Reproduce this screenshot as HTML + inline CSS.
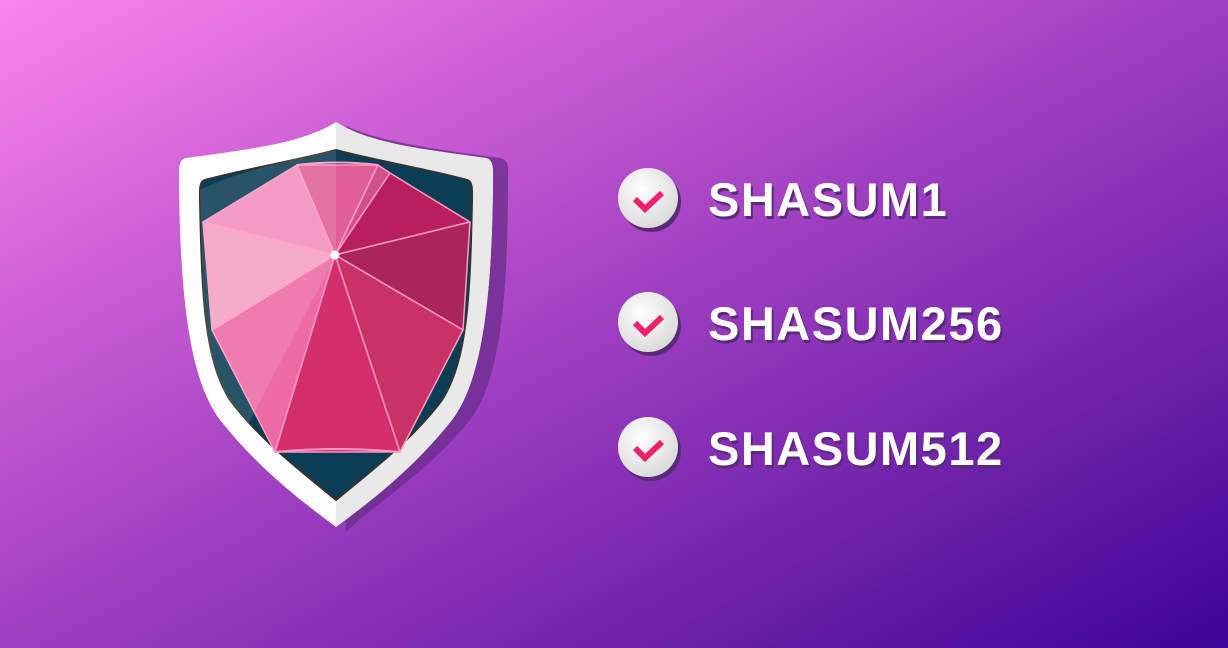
<!DOCTYPE html>
<html><head><meta charset="utf-8"><style>
html,body{margin:0;padding:0}
body{width:1228px;height:648px;overflow:hidden;background:linear-gradient(152deg,#fb84ec 0%,#c75bd2 28%,#9a3cbf 52%,#6f22aa 75%,#3d0497 100%);position:relative;font-family:"Liberation Sans",sans-serif}
svg{position:absolute;left:0;top:0}
.t{position:absolute;left:708px;color:#fff;font-weight:bold;font-size:47px;letter-spacing:1.5px;line-height:1;text-shadow:2px 3px 0 #5a2a7a}
</style></head><body>
<svg width="1228" height="648" viewBox="0 0 1228 648">
<defs>
<radialGradient id="c" cx="0.4" cy="0.35" r="0.7"><stop offset="0" stop-color="#fff"/><stop offset="1" stop-color="#d8d8d8"/></radialGradient>
</defs>
<path d="M346 126 C380 142 440 150 500 158 C510 160 508 170 508 180 C508 300 500 380 470 420 C430 470 380 500 346 532 Z" fill="#6d2e8e" opacity="0.8"/>
<path d="M336 122 C300 145 240 150 186 158 C178 160 179 170 179 180 C180 300 190 380 220 420 C260 470 300 500 336 527 C372 500 412 470 452 420 C482 380 492 300 493 180 C493 170 494 160 486 158 C432 150 372 145 336 122 Z" fill="#fff"/>
<path d="M336 122 C372 145 432 150 486 158 C494 160 493 170 493 180 C492 300 482 380 452 420 C412 470 372 500 336 527 Z" fill="#e9e9e9"/>
<path d="M336 150 C300 160 240 170 205 180 C199 182 200 190 200 200 C202 300 205 360 230 400 C260 440 300 470 336 500 C372 470 412 440 442 400 C467 360 470 300 472 200 C472 190 473 182 467 180 C432 170 372 160 336 150 Z" fill="#0b3d55" stroke="#333" stroke-width="2"/>
<g stroke="#ff9ac4" stroke-width="1.5" stroke-linejoin="round">
<polygon points="335,255 297,165 378,165" fill="#e06095"/>
<polygon points="335,255 378,165 390,173" fill="#d05088"/>
<polygon points="335,255 390,173 470,222" fill="#b81f5c"/>
<polygon points="335,255 470,222 463,330" fill="#ab255a"/>
<polygon points="335,255 463,330 400,452" fill="#c93266"/>
<polygon points="335,255 400,452 275,452" fill="#d42e6c"/>
<polygon points="335,255 275,452 212,330" fill="#ed6aa4"/>
<polygon points="335,255 212,330 203,222" fill="#f5a0c4"/>
<polygon points="335,255 203,222 297,165" fill="#f28fbc"/>
</g>
<path d="M275 452 Q337 446 400 452 M297 165 Q337 160 378 165" fill="none" stroke="#ff9ac4" stroke-width="2"/>
<path d="M336 150 L336 255 L240 440 C215 400 205 350 202 260 L200 190 C240 170 300 158 336 150 Z" fill="#fff" opacity="0.12"/>
<circle cx="335" cy="255" r="4.5" fill="#fff"/>
<g>
<circle cx="651" cy="202" r="30" fill="#5a2a7a"/><circle cx="648" cy="198" r="30" fill="url(#c)"/>
<path d="M635 199 L645 209 L662 193" fill="none" stroke="#f0206e" stroke-width="6"/>
<circle cx="651" cy="326" r="30" fill="#5a2a7a"/><circle cx="648" cy="322" r="30" fill="url(#c)"/>
<path d="M635 323 L645 333 L662 317" fill="none" stroke="#f0206e" stroke-width="6"/>
<circle cx="651" cy="451" r="30" fill="#5a2a7a"/><circle cx="648" cy="447" r="30" fill="url(#c)"/>
<path d="M635 448 L645 458 L662 442" fill="none" stroke="#f0206e" stroke-width="6"/>
</g>
</svg>
<div class="t" style="top:176px">SHASUM1</div>
<div class="t" style="top:300px">SHASUM256</div>
<div class="t" style="top:425px">SHASUM512</div>
</body></html>
